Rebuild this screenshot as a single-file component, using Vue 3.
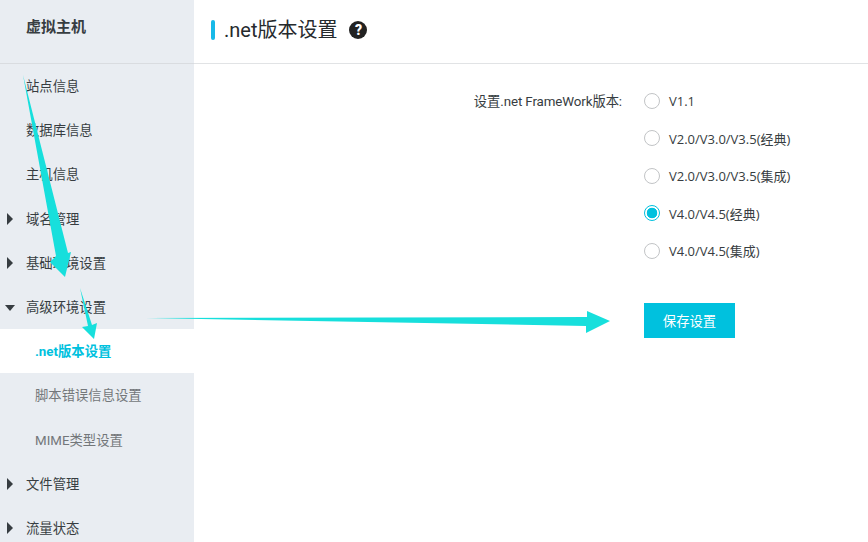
<script setup>
const items = [
  { label: '站点信息' },
  { label: '数据库信息' },
  { label: '主机信息' },
  { label: '域名管理', arrow: 'right' },
  { label: '基础环境设置', arrow: 'right' },
  { label: '高级环境设置', arrow: 'down' },
  { label: '.net版本设置', sub: true, active: true },
  { label: '脚本错误信息设置', sub: true },
  { label: 'MIME类型设置', sub: true },
  { label: '文件管理', arrow: 'right' },
  { label: '流量状态', arrow: 'right' }
]
const versions = [
  { label: 'V1.1' },
  { label: 'V2.0/V3.0/V3.5(经典)' },
  { label: 'V2.0/V3.0/V3.5(集成)' },
  { label: 'V4.0/V4.5(经典)', checked: true },
  { label: 'V4.0/V4.5(集成)' }
]
</script>

<template>
  <div class="page">
    <aside class="sidebar">
      <div class="side-title">虚拟主机</div>
      <ul class="menu">
        <li
          v-for="item in items"
          :key="item.label"
          class="menu-item"
          :class="{ sub: item.sub, active: item.active }"
        >
          <i v-if="item.arrow" class="tri" :class="item.arrow"></i>
          {{ item.label }}
        </li>
      </ul>
    </aside>

    <main class="main">
      <header class="head">
        <span class="bar"></span>
        <h1 class="title">.net版本设置</h1>
        <span class="help">?</span>
      </header>
      <section class="body">
        <div class="form">
          <div class="label">设置.net FrameWork版本:</div>
          <div class="options">
            <div v-for="v in versions" :key="v.label" class="option">
              <span class="radio" :class="{ on: v.checked }"></span>
              <span class="opt-text">{{ v.label }}</span>
            </div>
            <button class="save">保存设置</button>
          </div>
        </div>
      </section>
    </main>

    <svg class="arrows" width="868" height="542" viewBox="0 0 868 542">
      <polygon fill="#17dfdc" points="23,75 56,256 50,262 65,277 71,252 68,253" />
      <polygon fill="#17dfdc" points="80,288 88,326 82,327 94,339 97,323 92,325" />
      <polygon fill="#17dfdc" points="146,318 587,317 587,311 610,321 586,333 586,326" />
    </svg>
  </div>
</template>

<style>
html, body { margin: 0; overflow: hidden; background: #fff; }
</style>

<style scoped>
.page {
  position: relative;
  display: flex;
  width: 868px;
  height: 542px;
  overflow: hidden;
  font-family: Roboto, "Noto Sans CJK SC", sans-serif;
  font-size: 13.33px;
  color: #373d41;
  background: #fff;
}
.sidebar {
  flex: 0 0 194px;
  background: #e9edf2;
}
.side-title {
  box-sizing: border-box;
  height: 64px;
  padding: 16px 0 0 26px;
  font-size: 15px;
  line-height: 22px;
  font-weight: 700;
  border-bottom: 1px solid #d9dce0;
}
.menu {
  margin: 0;
  padding: 0;
  list-style: none;
}
.menu-item {
  position: relative;
  height: 44.2px;
  line-height: 46px;
  padding-left: 26px;
  white-space: nowrap;
}
.menu-item.sub {
  padding-left: 35px;
  color: #73777a;
}
.menu-item.active {
  background: #fff;
  color: #00c1de;
  font-weight: 700;
}
.tri {
  position: absolute;
  width: 0;
  height: 0;
  border-style: solid;
  border-color: transparent;
}
.tri.right {
  left: 7px;
  top: 16px;
  border-width: 6px 0 6px 6px;
  border-left-color: #373d41;
}
.tri.down {
  left: 5px;
  top: 20px;
  border-width: 6px 5.5px 0 5.5px;
  border-top-color: #373d41;
}
.main {
  flex: 1;
  min-width: 0;
}
.head {
  box-sizing: border-box;
  display: flex;
  align-items: center;
  height: 64px;
  padding: 0 0 4px 17px;
  border-bottom: 1px solid #e1e3e5;
}
.bar {
  width: 4px;
  height: 20px;
  border-radius: 2px;
  background: #17b9e8;
}
.title {
  margin: 0 0 0 9px;
  font-size: 20px;
  font-weight: 400;
  color: #262a2d;
  line-height: 26px;
}
.help {
  width: 18px;
  height: 18px;
  margin-left: 12px;
  border-radius: 50%;
  background: #222;
  color: #fff;
  font-size: 14px;
  font-weight: 900;
  line-height: 18px;
  text-align: center;
}
.form {
  display: grid;
  grid-template-columns: 428px 1fr;
  column-gap: 22px;
  padding-top: 26.75px;
}
.label {
  padding-top: 1px;
  text-align: right;
  line-height: 20px;
  letter-spacing: -0.1px;
}
.option {
  display: flex;
  align-items: center;
  height: 20px;
  margin-bottom: 17.5px;
}
.opt-text {
  font-family: "Open Sans", "Noto Sans CJK SC", sans-serif;
  font-size: 13px;
}
.radio {
  box-sizing: border-box;
  width: 16px;
  height: 16px;
  margin-right: 9px;
  border: 1px solid #c2c4c6;
  border-radius: 50%;
  background: #fff;
}
.radio.on {
  border-color: #00c1de;
  background: radial-gradient(circle, #00c1de 0 5px, #fff 5.6px);
}
.save {
  display: block;
  width: 91px;
  height: 35px;
  margin-top: 42px;
  padding: 0;
  border: 0;
  background: #00c1de;
  color: #fff;
  font: inherit;
}
.arrows {
  position: absolute;
  left: 0;
  top: 0;
  pointer-events: none;
}
</style>
